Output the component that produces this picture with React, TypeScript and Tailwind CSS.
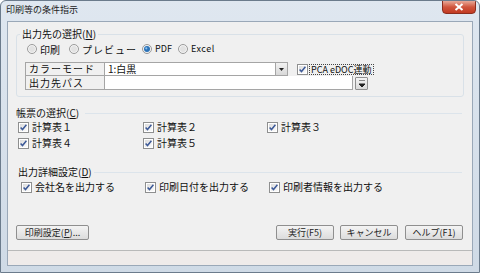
import React from 'react';

function CheckBox() {
  return (
    <svg width="11" height="11" viewBox="0 0 11 11" className="shrink-0">
      <defs>
        <linearGradient id="cb" x1="0" y1="0" x2="1" y2="1">
          <stop offset="0" stopColor="#dcdcdc" />
          <stop offset="1" stopColor="#fbfbfb" />
        </linearGradient>
      </defs>
      <rect x="0.5" y="0.5" width="10" height="10" fill="#fff" stroke="#8e8f8f" />
      <rect x="2" y="2" width="7" height="7" fill="url(#cb)" />
      <path d="M2.6 5.4 L4.5 7.5 L8.4 2.8" fill="none" stroke="#3d5a98" strokeWidth="1.5" />
    </svg>
  );
}

function Radio({ on }: { on?: boolean }) {
  return (
    <svg width="10" height="10" viewBox="0 0 10 10" className="shrink-0">
      <circle cx="5" cy="5" r="4.5" fill="#f3f3f3" stroke="#9a9a9a" />
      <circle cx="5" cy="5" r="3" fill={on ? '#2c73b8' : '#e2e2e2'} />
      {on && <circle cx="4.3" cy="4.3" r="1.1" fill="#8ec2ef" />}
    </svg>
  );
}

function Check({ label }: { label: string }) {
  return (
    <label className="flex items-center gap-[3px] h-[12px]">
      <CheckBox />
      <span className="leading-none">{label}</span>
    </label>
  );
}

function Btn({ children, className = '' }: { children: React.ReactNode; className?: string }) {
  return (
    <button
      className={`h-[15px] rounded-[2px] border border-[#8f8f8f] bg-gradient-to-b from-[#f4f4f4] to-[#dcdcdc] text-[9px] leading-none text-[#222] ${className}`}
    >
      {children}
    </button>
  );
}

export default function App() {
  return (
    <div className="w-[480px] h-[273px] flex flex-col bg-gradient-to-b from-[#dfe7f0] to-[#cfdae6] border border-[#6b7b8c] rounded-t-[6px] font-['Noto_Sans_CJK_JP',sans-serif] text-[10px] text-[#111] overflow-hidden">
      <div className="h-[20px] flex items-start justify-between shrink-0">
        <span className="pl-[5px] pt-[4px] text-[9px] leading-none text-[#222]">印刷等の条件指示</span>
        <div className="mr-[3px] -mt-px w-[34px] h-[14px] rounded-b-[4px] border border-[#8a2d1e] bg-gradient-to-b from-[#e7a898] via-[#d0553d] to-[#c23a22] flex items-center justify-center">
          <svg width="10" height="8" viewBox="0 0 10 8">
            <path d="M1.5 1 L8.5 7 M8.5 1 L1.5 7" stroke="#fff" strokeWidth="2" />
          </svg>
        </div>
      </div>

      <div className="flex-1 mx-[6px] flex flex-col bg-[#f0f0f0] border border-[#9aa8b8]">
        <fieldset className="mt-[5px] ml-[8px] w-[448px] border border-[#d9e1e8] rounded-[3px] pb-[6px]">
          <legend className="ml-[3px] px-[2px] leading-[14px]">
            出力先の選択(<span className="underline">N</span>)
          </legend>
          <div className="mt-[1px] flex items-center h-[14px] pl-[10px]">
            <span className="flex items-center gap-[3px] w-[42px]"><Radio />印刷</span>
            <span className="flex items-center gap-[3px] w-[73px] tracking-[1px]"><Radio />プレビュー</span>
            <span className="flex items-center gap-[3px] w-[36px] text-[9px]"><Radio on />PDF</span>
            <span className="flex items-center gap-[3px] text-[9px] tracking-[0.5px]"><Radio />Excel</span>
          </div>
          <div className="mt-[6px] ml-[8px] flex items-center">
            <div className="w-[80px] h-[14px] border border-[#a5a5a5] pl-[3px] flex items-center leading-none tracking-[1px]">カラーモード</div>
            <div className="w-[183px] h-[14px] border border-l-0 border-[#a5a5a5] bg-white flex items-center justify-between">
              <span className="pl-[3px] leading-none">1:白黒</span>
              <span className="w-[12px] h-[12px] border-l border-[#a5a5a5] bg-gradient-to-b from-[#f2f2f2] to-[#d8d8d8] flex items-center justify-center">
                <svg width="5" height="3" viewBox="0 0 5 3"><path d="M0 0 H5 L2.5 3 Z" fill="#222" /></svg>
              </span>
            </div>
            <label className="ml-[9px] flex items-center gap-[2px]">
              <CheckBox />
              <span className="outline outline-1 outline-dotted outline-[#444] text-[9px] leading-none px-[1px]">PCA eDOC連動</span>
            </label>
          </div>
          <div className="ml-[8px] flex items-center">
            <div className="w-[80px] h-[14px] border border-t-0 border-[#a5a5a5] pl-[3px] flex items-center leading-none tracking-[1px]">出力先パス</div>
            <div className="w-[248px] h-[14px] border-b border-r border-[#a5a5a5] bg-white" />
            <span className="ml-[2px] w-[13px] h-[13px] border border-[#8f8f8f] rounded-[1px] bg-gradient-to-b from-[#f4f4f4] to-[#dadada] flex items-center justify-center">
              <svg width="6" height="7" viewBox="0 0 6 7"><path d="M0 0 H6 M0 4 H6 L3 7 Z" stroke="#222" fill="#222" /></svg>
            </span>
          </div>
        </fieldset>

        <div className="mt-[10px] pl-[8px] pr-[10px] h-[12px] flex items-center">
          <span className="leading-none">帳票の選択(<span className="underline">C</span>)</span>
          <div className="flex-1 ml-[6px] h-px bg-[#dce4eb]" />
        </div>
        <div className="mt-[2px] ml-[10px] grid grid-cols-[125px_124px_auto] gap-y-[4px]">
          <Check label="計算表１" />
          <Check label="計算表２" />
          <Check label="計算表３" />
          <Check label="計算表４" />
          <Check label="計算表５" />
        </div>

        <div className="mt-[17px] pl-[10px] pr-[10px] h-[12px] flex items-center">
          <span className="leading-none">出力詳細設定(<span className="underline">D</span>)</span>
          <div className="flex-1 ml-[2px] h-px bg-[#dce4eb]" />
        </div>
        <div className="mt-[3px] ml-[13px] grid grid-cols-[124px_124px_auto]">
          <Check label="会社名を出力する" />
          <Check label="印刷日付を出力する" />
          <Check label="印刷者情報を出力する" />
        </div>

        <div className="mt-[32px] pl-[8px] pr-[9px] flex items-center">
          <Btn className="w-[73px]">印刷設定(<span className="underline">P</span>)...</Btn>
          <div className="flex-1" />
          <Btn className="w-[58px]">実行(F5)</Btn>
          <Btn className="ml-[6px] w-[58px]">キャンセル</Btn>
          <Btn className="ml-[7px] w-[58px]">ヘルプ(F1)</Btn>
        </div>

        <div className="mt-auto h-[15px] border-t border-[#b9b9b9] bg-[#efebea]" />
      </div>
      <div className="h-[6px] shrink-0" />
    </div>
  );
}
